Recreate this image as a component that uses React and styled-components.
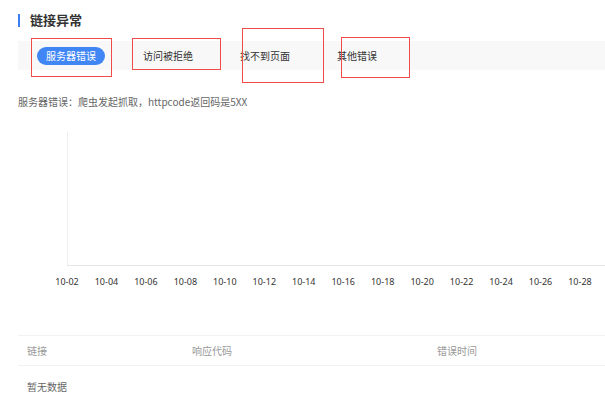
import React, { useState } from "react";
import styled, { createGlobalStyle } from "styled-components";

const GlobalStyle = createGlobalStyle`
    body {
        margin: 0;
        background: #fff;
        font-family: "Noto Sans CJK SC", "Noto Sans", sans-serif;
    }
`;

const Page = styled.div`
    position: relative;
    width: 605px;
    height: 401px;
    overflow: hidden;
    padding: 12px 0 0 18px;
    box-sizing: border-box;
`;

const Title = styled.div`
    position: relative;
    height: 16px;
    line-height: 16px;
    padding-left: 12px;
    font-size: 13px;
    font-weight: bold;
    color: #333;

    &::before {
        content: "";
        position: absolute;
        left: 0;
        top: 2px;
        width: 2px;
        height: 13px;
        background: #3d7ef5;
    }
`;

const TabStrip = styled.div`
    display: flex;
    align-items: center;
    gap: 29px;
    margin-top: 13px;
    height: 29px;
    padding-left: 19px;
    background: #f8f8f8;
`;

const Tab = styled.div`
    height: 18px;
    line-height: 18px;
    padding: 0 9px;
    border-radius: 9px;
    font-size: 10px;
    cursor: pointer;
    color: ${props => (props.active ? "#fff" : "#333")};
    background: ${props => (props.active ? "#4186f5" : "transparent")};
`;

const Desc = styled.div`
    margin-top: 23px;
    line-height: 18px;
    font-size: 10px;
    color: #666;
`;

const ChartBox = styled.div`
    height: 190px;
    svg {
        display: block;
    }
`;

const Table = styled.div`
    margin-top: 34px;
    font-size: 10px;
`;

const Row = styled.div`
    display: grid;
    grid-template-columns: 165px 245px 1fr;
    align-items: center;
    height: ${props => props.h}px;
    border-top: ${props => (props.head ? "1px solid #f2f2f2" : "none")};
    border-bottom: ${props => (props.head ? "1px solid #f2f2f2" : "none")};
    color: ${props => (props.head ? "#999" : "#666")};

    span {
        padding-left: 9px;
    }
`;

const Mark = styled.div`
    position: absolute;
    border: 1px solid #ee4b4b;
    box-sizing: border-box;
    pointer-events: none;
`;

const tabs = ["服务器错误", "访问被拒绝", "找不到页面", "其他错误"];
const days = ["02", "04", "06", "08", "10", "12", "14", "16", "18", "20", "22", "24", "26", "28"];
const marks = [
    { left: 31, top: 38, width: 81, height: 39 },
    { left: 132, top: 38, width: 89, height: 32 },
    { left: 242, top: 28, width: 82, height: 55 },
    { left: 341, top: 37, width: 69, height: 41 },
];

const App = () => {
    const [active, setActive] = useState(0);

    return (
        <>
            <GlobalStyle />
            <Page>
                <Title>链接异常</Title>
                <TabStrip>
                    {tabs.map((t, i) => (
                        <Tab key={t} active={i === active} onClick={() => setActive(i)}>
                            {t}
                        </Tab>
                    ))}
                </TabStrip>
                <Desc>服务器错误：爬虫发起抓取，httpcode返回码是5XX</Desc>
                <ChartBox>
                    <svg width="587" height="190" viewBox="0 0 587 190">
                        <line x1="49.5" y1="21" x2="49.5" y2="154" stroke="#eeeeee" />
                        <line x1="49" y1="154.5" x2="620" y2="154.5" stroke="#e6e6e6" />
                        {days.map((d, i) => (
                            <text
                                key={d}
                                x={49 + i * 39.46}
                                y="174"
                                textAnchor="middle"
                                fontSize="9"
                                fill="#333"
                                fontFamily="'Noto Sans', sans-serif"
                            >
                                10-{d}
                            </text>
                        ))}
                    </svg>
                </ChartBox>
                <Table>
                    <Row head h={29}>
                        <span>链接</span>
                        <span>响应代码</span>
                        <span>错误时间</span>
                    </Row>
                    <Row h={40}>
                        <span>暂无数据</span>
                    </Row>
                </Table>
                {marks.map((m, i) => (
                    <Mark key={i} style={m} />
                ))}
            </Page>
        </>
    );
};

export default App;
